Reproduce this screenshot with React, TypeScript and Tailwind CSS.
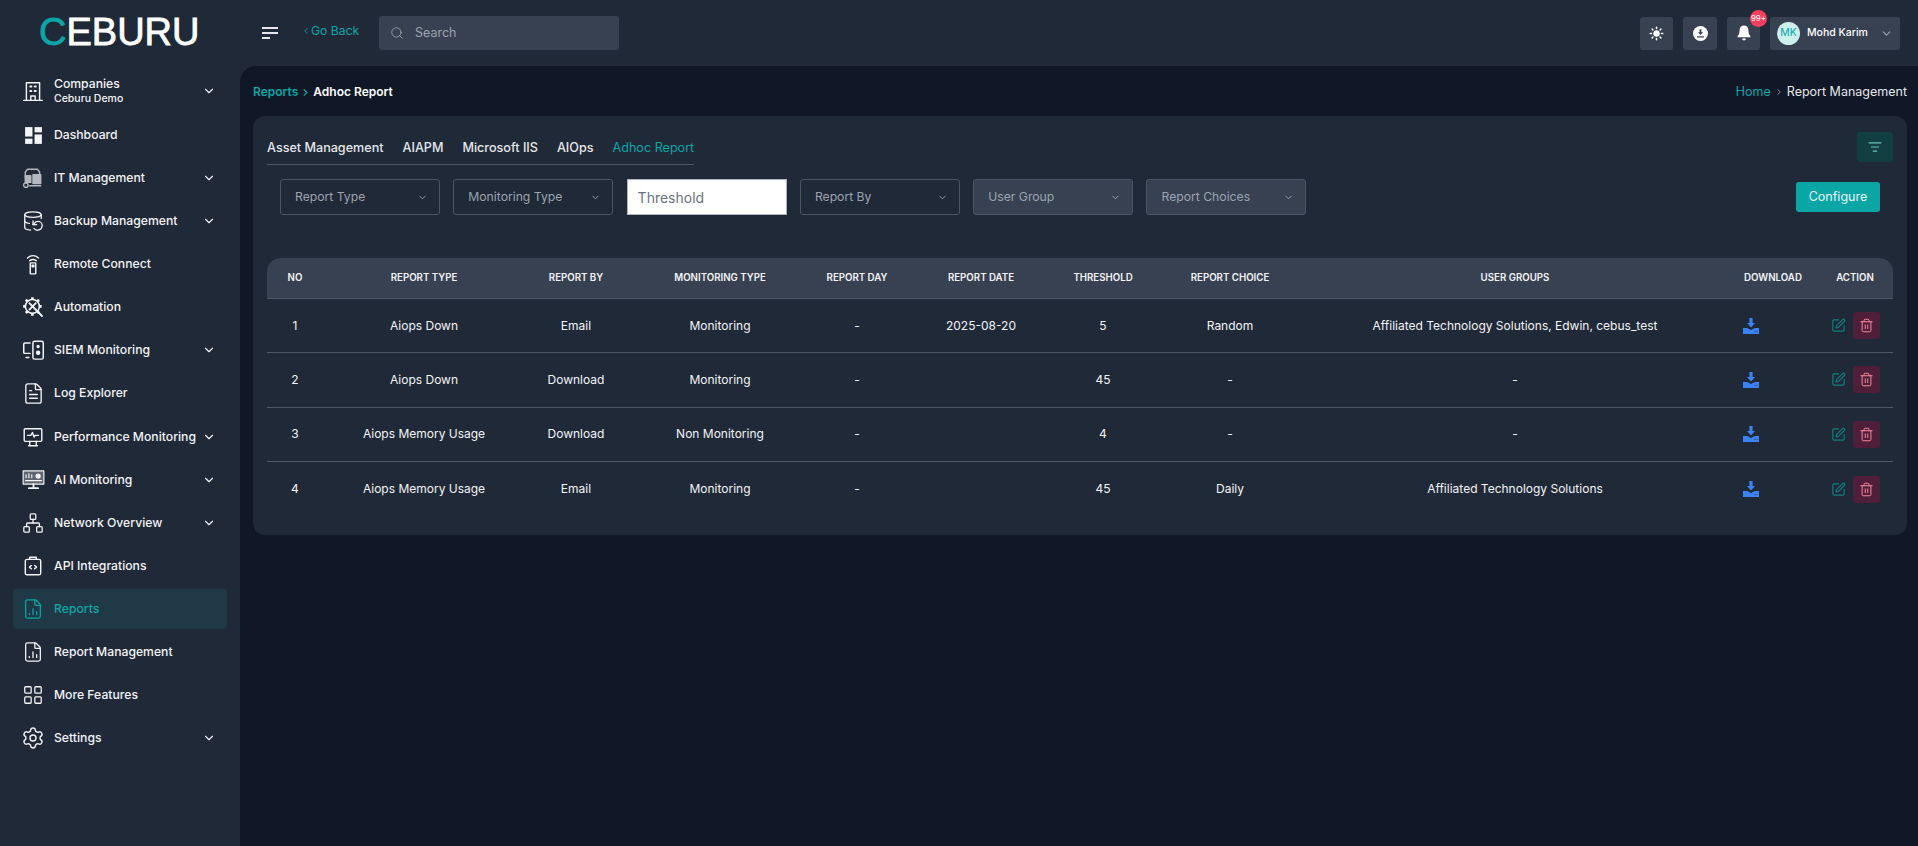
import { FC, ReactNode } from "react";
import {
  ChevronDown,
  ChevronLeft,
  ChevronRight,
  DatabaseBackup,
  FileChartColumn,
  FileText,
  LayoutGrid,
  ListFilter,
  Network,
  Search,
  Settings,
  SquarePen,
  Sun,
  Trash2,
} from "lucide-react";

const stroke = { fill: "none", stroke: "currentColor", strokeWidth: 1.3, strokeLinecap: "round", strokeLinejoin: "round" } as const;

const BuildingIcon = () => (
  <svg width="22" height="22" viewBox="0 0 20 20" {...stroke}>
    <path d="M1.500 18.500h17M4 18.500V2.500h12v16M8 18.500v-4h4v4" />
    <path d="M7.500 6h1M11.500 6h1M7.500 10h1M11.500 10h1" strokeWidth="1.800" />
  </svg>
);

const DashboardIcon = () => (
  <svg width="21" height="21" viewBox="0 0 20 20" fill="currentColor">
    <rect x="2" y="2" width="7" height="9" />
    <rect x="11" y="2" width="7" height="5" />
    <rect x="2" y="13" width="7" height="5" />
    <rect x="11" y="9" width="7" height="9" />
  </svg>
);

const ItIcon = () => (
  <svg width="22" height="22" viewBox="0 0 20 20" {...stroke} className="opacity-70">
    <path d="M3 9V4.500L5 2h9l2 2.500V9" />
    <rect x="3" y="8" width="5" height="6" fill="currentColor" />
    <rect x="10" y="7" width="7" height="8" fill="currentColor" />
    <circle cx="3.500" cy="16.500" r="2" />
    <path d="M7 17h10" />
  </svg>
);

const RemoteIcon = () => (
  <svg width="22" height="22" viewBox="0 0 20 20" {...stroke}>
    <path d="M5 4.500c3-2.600 7-2.600 10 0M7 7c2-1.400 4-1.400 6 0" />
    <rect x="7.500" y="9" width="5" height="10" rx="0.5" />
    <rect x="9.200" y="11" width="1.600" height="1.600" fill="currentColor" />
  </svg>
);

const AutomationIcon = () => (
  <svg width="24" height="24" viewBox="0 0 20 20" {...stroke}>
    <circle cx="9.500" cy="9.500" r="5.800" />
    <path d="M9.500 1.800v1.900M9.500 15.300v1.900M1.800 9.500h1.900M15.300 9.500h1.900M4 4l1.400 1.400M13.600 13.600l1.400 1.400M15 4l-1.400 1.400M4 15l1.400-1.400" strokeWidth="2.200" strokeLinecap="butt" />
    <path d="M7 6.800l10.500 10.700M12.300 6.800l-5.300 5.400" strokeWidth="1.500" />
  </svg>
);

const SiemIcon = () => (
  <svg width="23" height="23" viewBox="0 0 20 20" {...stroke}>
    <path d="M7 3.500H2.500a1 1 0 0 0-1 1v7a1 1 0 0 0 1 1H7M3.500 16H6" />
    <rect x="9.500" y="2" width="9" height="15.500" rx="1.500" />
    <circle cx="14" cy="6.500" r="0.8" fill="currentColor" />
    <circle cx="14" cy="12" r="1.300" fill="currentColor" />
  </svg>
);

const PerfIcon = () => (
  <svg width="22" height="22" viewBox="0 0 20 20" {...stroke}>
    <rect x="2" y="2.500" width="16" height="11.500" rx="1" />
    <path d="M5 8.500h3l1.500-2.500 1.500 4 1-1.500h3M6 18h8M7 14v3.500M13 14v3.500" />
  </svg>
);

const AiIcon = () => (
  <svg width="23" height="23" viewBox="0 0 20 20" {...stroke} strokeWidth="1">
    <rect x="1" y="2.500" width="18" height="11.500" fill="currentColor" fillOpacity="0.3" />
    <path d="M3 11h14M3.500 8.500V6M6 8.500V5M8.500 8.500V6" />
    <circle cx="14" cy="7" r="1.800" fill="currentColor" />
    <path d="M10 14v2.500M6 17.500h8" strokeWidth="1.600" />
  </svg>
);

const ApiIcon = () => (
  <svg width="22" height="22" viewBox="0 0 20 20" {...stroke}>
    <rect x="3" y="4" width="14" height="14" rx="1.500" />
    <path d="M7 4V2h6v2M8.500 9.500L6.800 11l1.700 1.500M11.500 9.500l1.700 1.500-1.700 1.500" />
  </svg>
);

const DownloadBoxIcon = () => (
  <svg width="16" height="16" viewBox="0 0 16 16" fill="currentColor">
    <path d="M6.400 0h3.200v5H12L8 9.600 4 5h2.400z" />
    <path fillRule="evenodd" d="M0 10h4.200L8 12l3.800-2H16v6H0zM11.500 13.200v.8h1v-.8zM13.500 13.200v.8h1v-.8z" />
  </svg>
);

type NavItem = { label: string; icon: ReactNode; chevron?: boolean; active?: boolean };

const navItems: NavItem[] = [
  { label: "Dashboard", icon: <DashboardIcon /> },
  { label: "IT Management", icon: <ItIcon />, chevron: true },
  { label: "Backup Management", icon: <DatabaseBackup size={22} strokeWidth={1.4} />, chevron: true },
  { label: "Remote Connect", icon: <RemoteIcon /> },
  { label: "Automation", icon: <AutomationIcon /> },
  { label: "SIEM Monitoring", icon: <SiemIcon />, chevron: true },
  { label: "Log Explorer", icon: <FileText size={23} strokeWidth={1.4} /> },
  { label: "Performance Monitoring", icon: <PerfIcon />, chevron: true },
  { label: "AI Monitoring", icon: <AiIcon />, chevron: true },
  { label: "Network Overview", icon: <Network size={22} strokeWidth={1.4} />, chevron: true },
  { label: "API Integrations", icon: <ApiIcon /> },
  { label: "Reports", icon: <FileChartColumn size={22} strokeWidth={1.4} />, active: true },
  { label: "Report Management", icon: <FileChartColumn size={22} strokeWidth={1.4} /> },
  { label: "More Features", icon: <LayoutGrid size={22} strokeWidth={1.4} /> },
  { label: "Settings", icon: <Settings size={24} strokeWidth={1.4} />, chevron: true },
];

const rows = [
  { no: 1, type: "Aiops Down", by: "Email", monitoring: "Monitoring", day: "-", date: "2025-08-20", threshold: "5", choice: "Random", groups: "Affiliated Technology Solutions, Edwin, cebus_test" },
  { no: 2, type: "Aiops Down", by: "Download", monitoring: "Monitoring", day: "-", date: "", threshold: "45", choice: "-", groups: "-" },
  { no: 3, type: "Aiops Memory Usage", by: "Download", monitoring: "Non Monitoring", day: "-", date: "", threshold: "4", choice: "-", groups: "-" },
  { no: 4, type: "Aiops Memory Usage", by: "Email", monitoring: "Monitoring", day: "-", date: "", threshold: "45", choice: "Daily", groups: "Affiliated Technology Solutions" },
];

const Select: FC<{ label: string; disabled?: boolean }> = ({ label, disabled }) => (
  <div className={`w-[160px] h-[36px] flex items-center justify-between pl-[14px] pr-[11px] rounded-[3px] border border-[#4b5563] text-[12.200px] text-[#9ca3af] ${disabled ? "bg-[#384152]" : ""}`}>
    {label}
    <ChevronDown size={11} strokeWidth={2} />
  </div>
);

const Sidebar: FC = () => (
  <aside className="w-[240px] shrink-0 px-[13px] text-[12.200px] font-medium text-[#f3f4f6]">
    <div className="h-[49px] flex items-center pl-[8px] pr-[11px]">
      <span className="w-[24px] mr-[9px] flex justify-center"><BuildingIcon /></span>
      <div className="flex-1 leading-[15px]">
        <div>Companies</div>
        <div className="text-[10.500px]">Ceburu Demo</div>
      </div>
      <ChevronDown size={14} strokeWidth={2} />
    </div>
    {navItems.map((item) => (
      <div
        key={item.label}
        className={`h-[40px] mb-[3.100px] flex items-center pl-[8px] pr-[11px] rounded-[4px] ${item.active ? "bg-[#1f3a46] text-[#0aa5a5]" : ""}`}
      >
        <span className="w-[24px] mr-[9px] flex justify-center">{item.icon}</span>
        <span className="flex-1 whitespace-nowrap">{item.label}</span>
        {item.chevron && <ChevronDown size={14} strokeWidth={2} />}
      </div>
    ))}
  </aside>
);

const Header: FC = () => (
  <header className="h-[66px] flex items-center shrink-0 pr-[18px]">
    <div className="w-[262px] pl-[39px] -mt-[2px]">
      <div className="font-['Liberation_Sans',sans-serif] text-[38px] leading-none font-normal text-white [-webkit-text-stroke:0.8px_currentColor]">
        <span className="text-[#0aa5a5]">C</span>EBURU
      </div>
    </div>
    <div className="w-[16px] flex flex-col gap-[3px] items-start">
      <span className="block h-[2px] w-[16px] bg-[#e5e7eb]" />
      <span className="block h-[2px] w-[16px] bg-[#e5e7eb]" />
      <span className="block h-[2px] w-[8px] bg-[#e5e7eb]" />
    </div>
    <div className="ml-[23px] w-[78px] -mt-[4px] flex items-center text-[12.200px] text-[#0aa5a5]">
      <ChevronLeft size={10} strokeWidth={2} />
      <span>Go Back</span>
    </div>
    <div className="w-[240px] h-[34px] rounded-[3px] bg-[#384152] flex items-center pl-[11px] text-[12.500px] text-[#9ca3af]">
      <Search size={14} strokeWidth={1.5} />
      <span className="ml-[11px]">Search</span>
    </div>
    <div className="ml-auto flex items-center">
      <button className="w-[33px] h-[33px] rounded-[3px] bg-[#384152] flex items-center justify-center text-white">
        <Sun size={15} strokeWidth={2.4} fill="currentColor" />
      </button>
      <button className="ml-[10px] w-[34px] h-[33px] rounded-[3px] bg-[#384152] flex items-center justify-center">
        <svg width="15" height="15" viewBox="0 0 15 15">
          <circle cx="7.500" cy="7.500" r="7.500" fill="#fff" />
          <path d="M6.600 3.200h1.800v3h1.700L7.500 9 4.900 6.200h1.700zM4 10.200h7v1.200H4z" fill="#384152" />
        </svg>
      </button>
      <button className="relative ml-[10px] w-[33px] h-[33px] rounded-[3px] bg-[#384152] flex items-center justify-center">
        <svg width="14" height="16" viewBox="0 0 14 16" fill="#fff">
          <path d="M7 .5c2.800 0 4.400 2 4.400 4.600 0 3 .6 4.600 2.100 6.400v.8H.5v-.8C2 9.700 2.600 8.100 2.600 5.100 2.600 2.500 4.200.5 7 .5z" />
          <path d="M5.200 13.500h3.600c0 1.200-.8 2-1.800 2s-1.800-.8-1.800-2z" />
        </svg>
        <span className="absolute -top-[7px] left-[23px] w-[17px] h-[17px] rounded-full bg-[#f43f5e] text-white text-[8px] flex items-center justify-center">99+</span>
      </button>
      <div className="ml-[10px] w-[130px] h-[33px] rounded-[3px] bg-[#384152] flex items-center pl-[7px] pr-[7px]">
        <span className="w-[23px] h-[23px] rounded-full bg-[#ccefec] text-[#0aa5a5] text-[10.500px] flex items-center justify-center">MK</span>
        <span className="ml-[7px] flex-1 text-[10.500px] font-medium text-white whitespace-nowrap">Mohd Karim</span>
        <ChevronDown size={13} className="text-[#9ca3af]" />
      </div>
    </div>
  </header>
);

const Th: FC<{ children: ReactNode; extra?: string }> = ({ children, extra = "" }) => (
  <th className={`h-[41px] bg-[#384152] border-b border-[#4b5563] text-center font-semibold text-[9.700px] text-[#f3f4f6] ${extra}`}>
    {children}
  </th>
);

const ReportTable: FC = () => (
  <table className="w-full table-fixed border-separate border-spacing-0 text-[12px] text-[#f3f4f6]">
    <colgroup>
      <col className="w-[56px]" />
      <col className="w-[202px]" />
      <col className="w-[102px]" />
      <col className="w-[186px]" />
      <col className="w-[88px]" />
      <col className="w-[160px]" />
      <col className="w-[84px]" />
      <col className="w-[170px]" />
      <col className="w-[400px]" />
      <col className="w-[116px]" />
      <col className="w-[62px]" />
    </colgroup>
    <thead>
      <tr>
        <Th extra="rounded-tl-[14px]">NO</Th>
        <Th>REPORT TYPE</Th>
        <Th>REPORT BY</Th>
        <Th>MONITORING TYPE</Th>
        <Th>REPORT DAY</Th>
        <Th>REPORT DATE</Th>
        <Th>THRESHOLD</Th>
        <Th>REPORT CHOICE</Th>
        <Th>USER GROUPS</Th>
        <Th>DOWNLOAD</Th>
        <Th extra="rounded-tr-[14px] pr-[14px]">ACTION</Th>
      </tr>
    </thead>
    <tbody>
      {rows.map((row, i) => {
        const cell = `h-[54.300px] text-center ${i < rows.length - 1 ? "border-b border-[#4b5563]" : ""}`;
        return (
          <tr key={row.no}>
            <td className={cell}>{row.no}</td>
            <td className={cell}>{row.type}</td>
            <td className={cell}>{row.by}</td>
            <td className={cell}>{row.monitoring}</td>
            <td className={cell}>{row.day}</td>
            <td className={cell}>{row.date}</td>
            <td className={cell}>{row.threshold}</td>
            <td className={cell}>{row.choice}</td>
            <td className={cell}>{row.groups}</td>
            <td className={cell}>
              <div className="pl-[28px] text-[#3b82f6]"><DownloadBoxIcon /></div>
            </td>
            <td className={cell}>
              <div className="flex items-center">
                <SquarePen size={15} strokeWidth={1.800} className="text-[#0f8080]" />
                <span className="ml-[7px] w-[27px] h-[27px] rounded-[3px] bg-[#4f1e38] flex items-center justify-center text-[#f98a9c]">
                  <Trash2 size={15} strokeWidth={1.600} />
                </span>
              </div>
            </td>
          </tr>
        );
      })}
    </tbody>
  </table>
);

const tabs = ["Asset Management", "AIAPM", "Microsoft IIS", "AIOps", "Adhoc Report"];

export default function App() {
  return (
    <div className="h-screen overflow-hidden flex flex-col bg-[#202938] font-['Inter',sans-serif]">
      <Header />
      <div className="flex flex-1 min-h-0">
        <Sidebar />
        <main className="flex-1 rounded-tl-[16px] bg-[#101726] pl-[13px] pr-[11px]">
          <div className="h-[50px] pt-[2px] flex items-center justify-between text-[12px]">
            <div className="flex items-center font-semibold">
              <span className="text-[#0aa5a5]">Reports</span>
              <ChevronRight size={11} strokeWidth={2.500} className="mx-[2px] text-[#0aa5a5]" />
              <span className="text-white">Adhoc Report</span>
            </div>
            <div className="flex items-center text-[12.500px]">
              <span className="text-[#0aa5a5]">Home</span>
              <ChevronRight size={10} className="mx-[3px] text-[#9ca3af]" />
              <span className="text-[#e5e7eb]">Report Management</span>
            </div>
          </div>
          <section className="h-[419px] rounded-[12px] bg-[#202938] pt-[16px] px-[14px]">
            <div className="flex justify-between">
              <div className="h-[33px] flex gap-[19px] items-center border-b border-[#4b5563] text-[12.600px] font-medium text-[#e5e7eb]">
                {tabs.map((tab) => (
                  <span key={tab} className={tab === "Adhoc Report" ? "text-[#0aa5a5] font-normal" : ""}>{tab}</span>
                ))}
              </div>
              <button className="w-[36px] h-[30px] rounded-[3px] bg-[#123f42] flex items-center justify-center text-[#6fc2bf]">
                <ListFilter size={14} />
              </button>
            </div>
            <div className="mt-[14px] px-[13px] h-[36px] flex items-center gap-[13.300px]">
              <Select label="Report Type" />
              <Select label="Monitoring Type" />
              <div className="w-[160px] h-[36px] flex items-center px-[10px] bg-white border border-[#aeb4bd] text-[14px] text-[#6b7280]">Threshold</div>
              <Select label="Report By" />
              <Select label="User Group" disabled />
              <Select label="Report Choices" disabled />
              <button className="ml-auto w-[84px] h-[30px] rounded-[3px] bg-[#0aa5a5] text-[12.500px] text-[#e5f6f6]">Configure</button>
            </div>
            <div className="mt-[43px]">
              <ReportTable />
            </div>
          </section>
        </main>
      </div>
    </div>
  );
}
